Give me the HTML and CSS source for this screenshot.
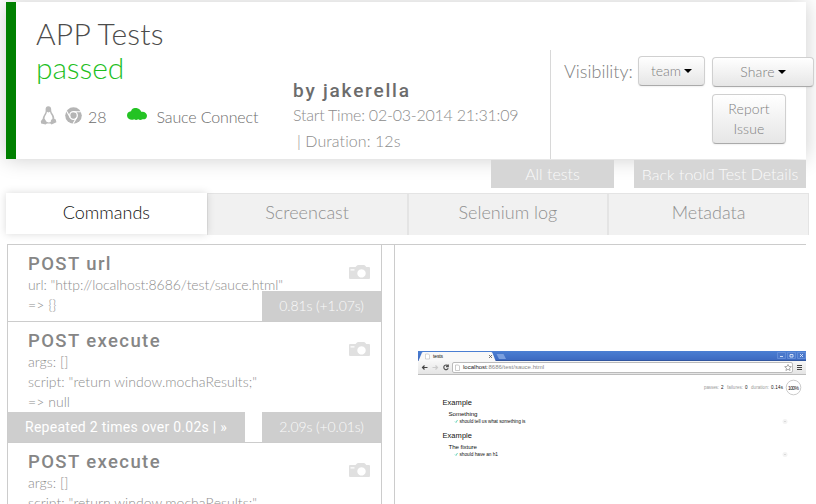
FILE: index.html
```html
<!DOCTYPE html>
<html lang="en">
<head>
<meta charset="utf-8">
<title>APP Tests</title>
<link rel="stylesheet" href="styles.css">
</head>
<body>
<svg class="defs" width="0" height="0" aria-hidden="true">
  <symbol id="camera" viewBox="0 0 21 15"><path fill="#e0e0e0" fill-rule="evenodd" d="M6.500 2 8 .4Q8.400 0 9 0h6q.6 0 1 .4L17.300 2H20q1 0 1 1v10q0 1-1 1H1q-1 0-1-1V3q0-1 1-1zM12.500 4.200a4.200 4.200 0 1 0 .01 0zM1.500 4.200v1.200h4V4.200z"/></symbol>
</svg>
<header class="job">
  <div class="summary">
    <h1 class="name">APP Tests</h1>
    <div class="status">passed</div>
    <div class="platform">
      <svg class="linux" width="17" height="19" viewBox="0 0 17 19"><path fill="#b9b9b9" fill-rule="evenodd" d="M8.300.3C6.300.3 5.400 1.800 5.600 4c.1 2-.1 2.500-1.300 4.400-1 1.700-1.500 3-1.600 4.400L.8 15.200l.3 2.200 4.500 1.200 1.300-1h3.500l1.200 1 4.800-2.400-.6-2.600-1.500-.8c0-2-.7-3.600-1.900-5.200C11.400 6.100 11.200 5.400 11.200 3.600 11.200 1.500 10.200.3 8.300.3zM7 5.800l1.500.8 1.500-.8c.3 1.600 1 2.300 1.800 3.700.6 1.200.8 2.300.6 3.600l-1.400.8-.3 2-2 .5-2.200-.6-2-3.200c.1-1.500.5-2.500 1.300-3.700C6.500 7.700 6.900 6.800 7 5.800z"/></svg>
      <svg class="chrome" width="17" height="17" viewBox="0 0 17 17"><circle cx="8.500" cy="8.500" r="8.300" fill="#b5b5b5"/><circle cx="8.500" cy="8.500" r="3.800" fill="#b5b5b5" stroke="#fff" stroke-width="1.300"/><path d="M8.500 4.700H16M5.200 10.400 1.500 4M11.800 10.400 8 16.800" fill="none" stroke="#fff" stroke-width="1.100"/></svg>
      <span class="version">28</span>
      <svg class="cloud" width="20" height="12" viewBox="0 0 20 12"><path fill="#24c324" d="M4 3.200C5-.2 8.500-.4 10.200.3c2 .5 3.400 1.700 4 3.500 3-.7 5.800 1.200 5.800 3.900 0 2.500-2 4-4.500 3.600-1.500.9-3 .8-4.300 0-1.500.8-2.800.8-4 0-3.200 1.400-6.600-.2-7-2.700C-.5 5.700 1 3.400 4 3.200z"/></svg>
      <span class="tunnel">Sauce Connect</span>
    </div>
  </div>
  <div class="owner">
    <h2 class="by">by jakerella</h2>
    <div class="time">Start Time: 02-03-2014 21:31:09</div>
    <div class="time duration">| Duration: 12s</div>
  </div>
  <div class="actions">
    <span class="visibility">Visibility:</span>
    <button class="btn team">team<i class="caret"></i></button>
    <div class="stack">
      <button class="btn share">Share<i class="caret"></i></button>
      <button class="btn report">Report<br>Issue</button>
    </div>
  </div>
</header>
<nav class="links">
  <a class="link all">All tests</a>
  <a class="link back"><span class="clipped">Back to</span><span>old Test Details</span></a>
</nav>
<nav class="tabs">
  <a class="tab active">Commands</a>
  <a class="tab">Screencast</a>
  <a class="tab">Selenium log</a>
  <a class="tab">Metadata</a>
</nav>
<main class="content">
  <section class="commands">
    <article class="command">
      <h3>POST url</h3>
      <p class="long">url: "http://localhost:8686/test/sauce.html"</p>
      <p>=&gt; {}</p>
      <svg class="camera" width="21" height="15"><use href="#camera"/></svg>
      <span class="took">0.81s (+1.07s)</span>
    </article>
    <article class="command repeated">
      <h3>POST execute</h3>
      <p>args: []</p>
      <p>script: "return window.mochaResults;"</p>
      <p>=&gt; null</p>
      <svg class="camera" width="21" height="15"><use href="#camera"/></svg>
      <span class="repeat">Repeated 2 times over 0.02s | »</span>
      <span class="took">2.09s (+0.01s)</span>
    </article>
    <article class="command last">
      <h3>POST execute</h3>
      <p>args: []</p>
      <p>script: "return window.mochaResults;"</p>
      <svg class="camera" width="21" height="15"><use href="#camera"/></svg>
    </article>
  </section>
  <section class="preview">
    <svg class="shot" width="388" height="140" viewBox="0 0 388 140">
      <defs>
        <linearGradient id="title" x2="0" y2="1"><stop stop-color="#4b7fd3"/><stop offset="1" stop-color="#3c68bf"/></linearGradient>
        <linearGradient id="bar" x2="0" y2="1"><stop stop-color="#f7f7f7"/><stop offset="1" stop-color="#e3e3e3"/></linearGradient>
      </defs>
      <rect width="388" height="10" fill="url(#title)"/>
      <rect y="9" width="388" height="1" fill="#31569f"/>
      <path d="M0 11 4 1.500Q4.500 1 5 1h68q1 0 1.500 1L78 11z" fill="#f8f8f8"/>
      <path d="M78.500 3h7l2.500 5h-7z" fill="#7ba0df"/>
      <path d="M7.500 3h3l1 1v4h-4z" fill="#fff" stroke="#bbb" stroke-width=".6"/>
      <text x="15" y="7.200" class="tiny" textLength="10">tests</text>
      <path d="m71 4 3 3m0-3-3 3" stroke="#555" stroke-width=".8"/>
      <g fill="#4a78cb" stroke="#6f97dc" stroke-width=".7"><path d="M359.500 1.500h8v6h-8zM369.500 1.500h8v6h-8zM379.500 1.500h8v6h-8z"/></g>
      <path d="M362 5.500h3M372 3.500h3v2.500h-3zM382 3l3 3m0-3-3 3" fill="none" stroke="#dce8fb" stroke-width=".9"/>
      <rect y="10" width="388" height="14" fill="url(#bar)"/>
      <rect y="23" width="388" height="1" fill="#bdbdbd"/>
      <path d="M9.500 16.500h-5m2-2-2 2 2 2" fill="none" stroke="#444" stroke-width="1.200"/>
      <path d="M14.500 16.500h5m-2-2 2 2-2 2" fill="none" stroke="#ccc" stroke-width="1.200"/>
      <path d="M30 15a2.300 2.300 0 1 0 .2 2.300M30.300 13.500v2.200H28" fill="none" stroke="#555" stroke-width="1.200"/>
      <rect x="34.500" y="11.500" width="340" height="10" rx="1.500" fill="#fff" stroke="#bbb"/>
      <path d="M37.500 14h3l1 1v4.500h-4z" fill="#fff" stroke="#aaa" stroke-width=".6"/>
      <text x="45" y="18.200" class="url" textLength="81"><tspan fill="#222">localhost</tspan>:8686/test/sauce.html</text>
      <path d="m370 13.500 1 2 2.300.2-1.800 1.500.6 2.300-2.100-1.200-2.100 1.200.6-2.300-1.800-1.500 2.300-.2z" fill="#fff" stroke="#888" stroke-width=".7"/>
      <path d="M379 14.500h5m-5 2h5m-5 2h5" stroke="#444" stroke-width="1.100"/>
      <g class="stats"><text x="286" y="38.300" textLength="15">passes:</text><text x="303" y="38.300" class="strong">2</text><text x="309" y="38.300" textLength="16">failures:</text><text x="327" y="38.300" class="strong">0</text><text x="333" y="38.300" textLength="18">duration:</text><text x="353" y="38.300" class="strong" textLength="12">0.14s</text></g>
      <circle cx="375.500" cy="36.500" r="7.300" fill="none" stroke="#bdbdbd" stroke-width=".8"/>
      <text x="370" y="38.600" class="tiny" textLength="11">100%</text>
      <g class="suite">
        <text x="24.500" y="54" class="h" textLength="29.500">Example</text>
        <text x="30.500" y="64.500" class="s" textLength="29">Something</text>
        <path d="m37 70.500 1 1 1.500-2.500"/>
        <text x="41.500" y="72.200" class="t" textLength="66">should tell us what something is</text>
        <text x="24.500" y="87" class="h" textLength="29.500">Example</text>
        <text x="30.500" y="97.500" class="s" textLength="28.500">The fixture</text>
        <path d="m37 103.500 1 1 1.500-2.500"/>
        <text x="41.500" y="105.200" class="t" textLength="38.500">should have an h1</text>
      </g>
      <g fill="#f3f3f3"><circle cx="367" cy="70.500" r="2.500"/><circle cx="367" cy="103.500" r="2.500"/></g>
      <g fill="#bbb"><circle cx="367" cy="70.500" r=".6"/><circle cx="367" cy="103.500" r=".6"/></g>
    </svg>
  </section>
</main>
</body>
</html>
```
FILE: styles.css
```css
* { box-sizing: border-box; }
html, body { height: 504px; overflow: hidden; }
body { margin: 0; padding: 2px 0 0 6px; background: #fff; font-family: Lato, sans-serif; font-weight: 300; color: #808080; }
h1, h2, h3, p { margin: 0; }
.defs { position: absolute; }

.job { display: flex; width: 800px; height: 157px; border-left: 10px solid #008000; background: #fff; box-shadow: 0 0 20px rgba(0, 0, 0, .2); }
.summary { width: 277px; padding: 14px 0 0 20px; }
.name { font-size: 30px; line-height: 35px; font-weight: 300; letter-spacing: .2px; color: #4c4c4c; }
.status { font-size: 30px; line-height: 34px; letter-spacing: -.1px; color: #1fbf1f; margin-top: -1px; }
.platform { display: flex; align-items: center; height: 30px; margin-top: 17px; font-size: 16px; color: #6c6c6c; }
.linux { margin: -2px 0 0 4px; }
.chrome { margin: -2px 0 0 8px; }
.version { margin: 0 0 0 6px; }
.cloud { margin: -4px 0 0 20px; }
.tunnel { margin: 0 0 0 10px; letter-spacing: -.15px; }
.owner { width: 257px; padding-top: 76px; }
.by { font: 500 19px/25px Roboto, sans-serif; letter-spacing: 1.8px; color: #6c6c6c; }
.time { margin-top: -1px; margin-bottom: 1px; font-size: 16px; line-height: 26px; letter-spacing: -.23px; color: #8c8c8c; white-space: nowrap; }
.duration { padding-left: 4px; letter-spacing: .08px; }
.actions { display: flex; align-items: flex-start; width: 256px; height: 109px; margin-top: 48px; padding: 6px 0 0 13px; border-left: 1px solid #d8d8d8; }
.visibility { flex: none; width: 74px; font-size: 18px; line-height: 30px; white-space: nowrap; }
.btn { flex: none; padding: 0; border: 1px solid #d0d0d0; border-bottom-color: #aaa; border-radius: 4px; background: linear-gradient(#fff, #e6e6e6); box-shadow: 0 1px 2px rgba(0, 0, 0, .06); font: 300 14px/20px Lato, sans-serif; color: #808080; }
.caret { display: inline-block; margin-left: 3px; border: 4px solid transparent; border-top-color: #000; border-bottom: 0; vertical-align: 3px; }
.team { width: 67px; height: 30px; }
.stack { display: flex; flex: none; flex-direction: column; gap: 7px; margin: 1px 0 0 7px; }
.share { width: 102px; height: 30px; letter-spacing: .15px; }
.report { width: 74px; height: 50px; letter-spacing: .15px; }

.links { display: flex; gap: 20px; width: 800px; height: 29px; padding-top: 1px; justify-content: flex-end; }
.link { position: relative; display: flex; justify-content: center; height: 28px; background: #d6d6d6; font-size: 16px; line-height: 28px; color: #fafafa; }
.all { width: 123px; }
.back { width: 172px; }
.clipped { height: 20px; overflow: hidden; line-height: 30px; }

.tabs { display: flex; width: 803px; height: 42px; margin-top: 5px; }
.tab { flex: 1; border: 1px solid #e4e4e4; border-bottom: 0; background: #f1f1f1; text-align: center; font-size: 18px; line-height: 37px; color: #909090; }
.tab.active { position: relative; height: 41px; border-color: transparent; background: #fff; box-shadow: 0 0 8px rgba(0, 0, 0, .15); color: #111; }

.content { display: flex; gap: 12px; width: 799px; height: 260px; margin: 9px 0 0 1px; border-top: 1px solid #ccc; overflow: hidden; }
.commands { width: 375px; border: solid #ccc; border-width: 0 1px; }
.command { position: relative; height: 77px; padding: 9px 20px 0; border-bottom: 1px solid #ccc; }
.command.repeated, .command.last { height: 121px; }
.command h3 { font: 500 18.500px/21px Roboto, sans-serif; letter-spacing: 1.4px; color: #868686; }
.command p { font-size: 14px; line-height: 20px; letter-spacing: .05px; color: #8e8e8e; white-space: nowrap; }
.command .long { letter-spacing: -.07px; }
.camera { position: absolute; top: 20px; right: 11px; }
.took { position: absolute; right: 0; bottom: 0; width: 119px; height: 30px; background: #cecece; font-size: 14px; line-height: 30px; letter-spacing: -.1px; text-align: center; color: #fafafa; }
.repeat { position: absolute; left: 0; bottom: 0; width: 237px; height: 30px; padding-left: 17px; background: #cecece; font: 400 14px/30px Roboto, sans-serif; letter-spacing: .27px; color: #fff; white-space: nowrap; }
.preview { width: 412px; padding: 106px 0 0 23px; border-left: 1px solid #ccc; }
.shot { display: block; font-family: "Liberation Sans", sans-serif; font-weight: 400; }
.tiny { font-size: 5px; fill: #111; }
.url { font-size: 6px; fill: #888; }
.stats { font-size: 4.5px; fill: #999; }
.strong { fill: #111; }
.suite text { fill: #111; }
.suite path { fill: none; stroke: #4cc9ac; stroke-width: .8; }
.suite .h { font-size: 7.5px; }
.suite .s { font-size: 6.2px; }
.suite .t { font-size: 4.8px; }
```
